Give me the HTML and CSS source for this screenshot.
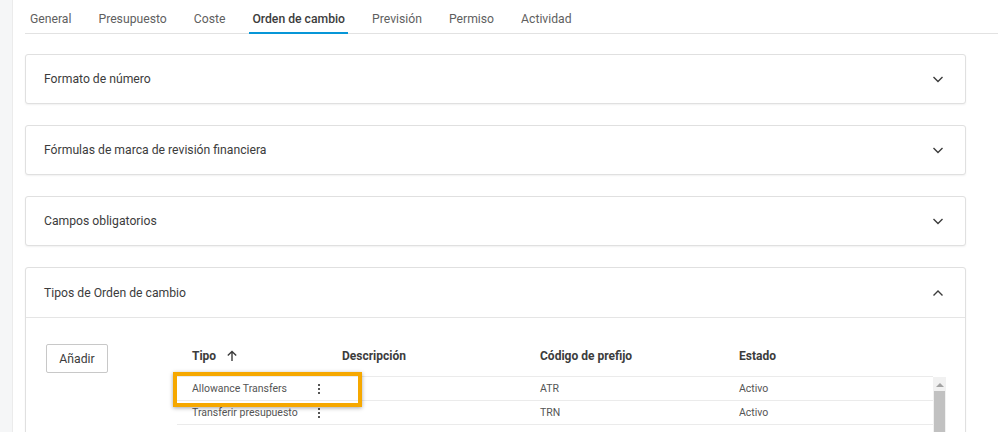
FILE: index.html
```html
<!DOCTYPE html>
<html lang="es">
  <head>
    <meta charset="UTF-8" />
    <title>Configuración - Orden de cambio</title>
    <link rel="stylesheet" href="styles.css">
  </head>
  <body>
    <div class="app">
      <!-- Side strip -->
      <aside class="sidebar"></aside>

      <main class="main">
        <!-- Tabs -->
        <nav class="tabs">
          <a class="tab">General</a>
          <a class="tab">Presupuesto</a>
          <a class="tab">Coste</a>
          <a class="tab active">Orden de cambio</a>
          <a class="tab">Previsión</a>
          <a class="tab">Permiso</a>
          <a class="tab">Actividad</a>
        </nav>

        <!-- Panels -->
        <section class="panel">
          <div class="panel-header">
            <span>Formato de número</span>
            <svg class="chevron" width="12" height="12" viewBox="0 0 12 12"><path d="M1.5 4l4.5 4.5L10.5 4" fill="none" stroke="#3c3c3c" stroke-width="1.4"/></svg>
          </div>
        </section>

        <section class="panel">
          <div class="panel-header">
            <span>Fórmulas de marca de revisión financiera</span>
            <svg class="chevron" width="12" height="12" viewBox="0 0 12 12"><path d="M1.5 4l4.5 4.5L10.5 4" fill="none" stroke="#3c3c3c" stroke-width="1.4"/></svg>
          </div>
        </section>

        <section class="panel">
          <div class="panel-header">
            <span>Campos obligatorios</span>
            <svg class="chevron" width="12" height="12" viewBox="0 0 12 12"><path d="M1.5 4l4.5 4.5L10.5 4" fill="none" stroke="#3c3c3c" stroke-width="1.4"/></svg>
          </div>
        </section>

        <section class="panel open">
          <div class="panel-header">
            <span>Tipos de Orden de cambio</span>
            <svg class="chevron" width="12" height="12" viewBox="0 0 12 12"><path d="M1.5 8.5L6 4l4.5 4.5" fill="none" stroke="#3c3c3c" stroke-width="1.4"/></svg>
          </div>
          <div class="panel-body">
            <button class="add-button">Añadir</button>

            <div class="types-table">
              <div class="table-head">
                <div class="cell col-type">Tipo
                  <svg class="sort-icon" width="12" height="12" viewBox="0 0 12 12"><path d="M6 11V1.5M1.8 5.6L6 1.5l4.2 4.1" fill="none" stroke="#3c3c3c" stroke-width="1.4"/></svg>
                </div>
                <div class="cell col-desc">Descripción</div>
                <div class="cell col-code">Código de prefijo</div>
                <div class="cell col-state">Estado</div>
              </div>

              <div class="table-body">
                <div class="rows">
                  <div class="row">
                    <div class="cell col-type"><span>Allowance Transfers</span><span class="kebab"><i></i><i></i><i></i></span></div>
                    <div class="cell col-desc"></div>
                    <div class="cell col-code">ATR</div>
                    <div class="cell col-state">Activo</div>
                  </div>
                  <div class="row">
                    <div class="cell col-type"><span>Transferir presupuesto</span><span class="kebab"><i></i><i></i><i></i></span></div>
                    <div class="cell col-desc"></div>
                    <div class="cell col-code">TRN</div>
                    <div class="cell col-state">Activo</div>
                  </div>
                </div>
                <div class="scrollbar">
                  <div class="scroll-up"></div>
                  <div class="scroll-thumb"></div>
                </div>

                <!-- Highlight callout -->
                <div class="highlight"></div>
              </div>
            </div>
          </div>
        </section>
      </main>
    </div>
  </body>
</html>
```

FILE: styles.css
```css
/* Base */
* {
  margin: 0;
  padding: 0;
  box-sizing: border-box;
}

body {
  font-family: Roboto, "Open Sans", sans-serif;
  background: #fff;
  color: #3c3c3c;
  height: 432px;
  overflow: hidden;
}

.app {
  display: flex;
  min-height: 432px;
}

.sidebar {
  width: 13px;
  background: #f5f6f7;
  border-right: 1px solid #ebebeb;
  flex-shrink: 0;
}

.main {
  flex: 1;
  padding-left: 12px;
}

/* Tabs */
.tabs {
  display: flex;
  gap: 21px;
  height: 34px;
  padding-left: 2px;
  border-bottom: 1px solid #e2e2e2;
}

.tab {
  padding: 0 3px;
  font-size: 12.2px;
  line-height: 39px;
  height: 34px;
  color: #5f5f5f;
  cursor: pointer;
}

.tab.active {
  color: #3c3c3c;
  font-weight: 500;
  border-bottom: 2px solid #0696d7;
}

/* Panels */
.panel {
  margin: 20px 32px 0 0;
  border: 1px solid #e0e0e0;
  border-radius: 3px;
  box-shadow: 0 1px 2px rgba(0, 0, 0, 0.06);
  background: #fff;
}

.panel + .panel {
  margin-top: 21px;
}

.panel-header {
  height: 48px;
  display: flex;
  align-items: center;
  justify-content: space-between;
  padding: 0 21px 0 18px;
  font-size: 12.2px;
  color: #3c3c3c;
}

.panel.open .panel-header {
  height: 50px;
  border-bottom: 1px solid #e5e5e5;
}

.panel-body {
  display: flex;
  align-items: flex-start;
  padding: 26px 19px 0 20px;
}

.add-button {
  width: 62px;
  height: 29px;
  border: 1px solid #c8c8c8;
  border-radius: 2px;
  background: #fff;
  font-family: inherit;
  font-size: 12.2px;
  color: #3c3c3c;
}

/* Table */
.types-table {
  margin-left: 69px;
  flex: 1;
}

.table-head {
  display: flex;
  margin-right: 13px;
  border-bottom: 1px solid #ebebeb;
}

.table-head .cell {
  font-size: 12px;
  font-weight: 700;
  line-height: 24px;
  padding-bottom: 8px;
  padding-left: 15px;
  color: #3c3c3c;
}

.cell {
  padding: 0 14px 0 15px;
  display: flex;
  align-items: center;
}

.col-type { width: 150px; }
.col-desc { width: 198px; }
.col-code { width: 199px; }
.col-state { flex: 1; }

.sort-icon {
  margin-left: 10px;
}

.table-body {
  display: flex;
  position: relative;
  min-height: 70px;
}

.rows {
  flex: 1;
}

.row {
  display: flex;
  height: 24px;
  border-bottom: 1px solid #ebebeb;
  font-size: 10.5px;
  color: #555;
}

.row .col-type {
  justify-content: space-between;
  padding-right: 6px;
}

.kebab {
  display: flex;
  flex-direction: column;
  gap: 2px;
  padding: 0 1px;
}

.kebab i {
  display: block;
  width: 2px;
  height: 2px;
  background: #555;
}

.scrollbar {
  width: 13px;
  background: #f1f1f1;
  display: flex;
  flex-direction: column;
  align-items: center;
}

.scroll-up {
  margin-top: 6px;
  width: 0;
  height: 0;
  border-left: 4px solid transparent;
  border-right: 4px solid transparent;
  border-bottom: 4px solid #a3a3a3;
}

.scroll-thumb {
  margin-top: 4px;
  width: 11px;
  flex: 1;
  background: #c1c1c1;
}

/* Annotation box over the first row */
.highlight {
  position: absolute;
  left: -4px;
  top: -5px;
  width: 189px;
  height: 35px;
  border: 4px solid #f6a800;
  box-shadow: 0 1px 4px rgba(0, 0, 0, 0.35);
  pointer-events: none;
}
```
